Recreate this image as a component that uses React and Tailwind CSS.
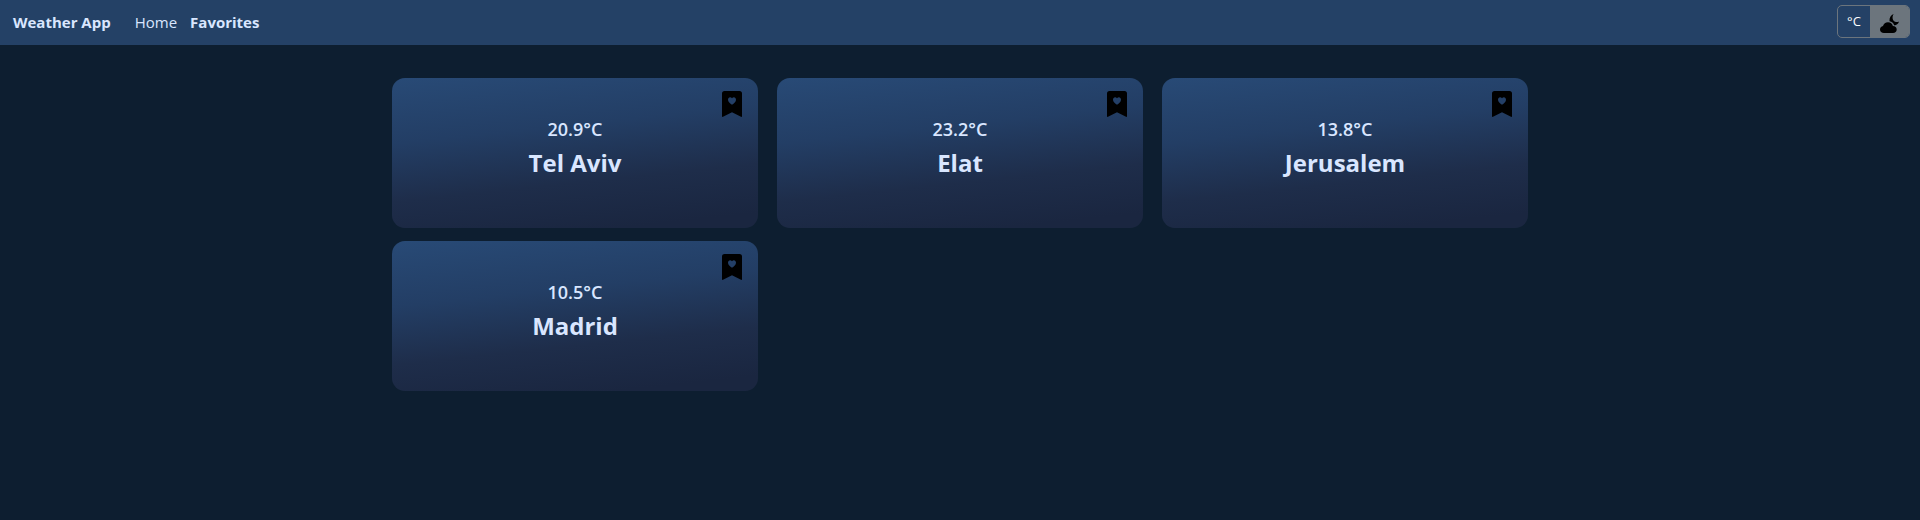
const cities = [
  { name: "Tel Aviv", temp: "20.9°C" },
  { name: "Elat", temp: "23.2°C" },
  { name: "Jerusalem", temp: "13.8°C" },
  { name: "Madrid", temp: "10.5°C" },
];

function BookmarkHeartIcon() {
  return (
    <svg viewBox="0 0 20 26" className="h-[26px] w-5" fill="currentColor" aria-hidden="true">
      <path
        fillRule="evenodd"
        d="M2.5 0h15A2.5 2.5 0 0 1 20 2.500V25.200q0 1.100-1 .6L10 21.200 1 25.800q-1 .5-1-.6V2.500A2.500 2.500 0 0 1 2.500 0ZM10 7.200C8.600 5.400 6 6.100 6 8.700c0 1.900 2 3.600 4 5 2-1.400 4-3.100 4-5 0-2.600-2.600-3.300-4-1.500Z"
      />
    </svg>
  );
}

function CloudyNightIcon() {
  return (
    <svg viewBox="0 0 19 19" className="size-[19px]" fill="currentColor" aria-hidden="true">
      <path d="M4 19C1.600 19 0 17.600 0 15.600c0-1.800 1.200-3.200 3-3.500C3.700 9.800 5.500 8.200 8 8.200c2.500 0 4.400 1.600 4.900 3.900 2.300.1 3.800 1.500 3.800 3.500 0 2-1.500 3.400-3.700 3.400Z" />
      <path d="M13.600 0C11 1 9.400 3.300 9.500 6.300c0 .4 0 .7.100 1 2.200.4 3.900 1.900 4.600 3.900h.8c1.900-.3 3.500-1.600 4-3.700-1.200.7-2.600.8-3.900.2C12.400 6.500 11.800 3 13.600 0Z" />
    </svg>
  );
}

function CityCard({ name, temp }) {
  return (
    <article className="relative flex h-[150px] flex-col items-center rounded-[13px] bg-[linear-gradient(174deg,#284a76_0%,#233e65_35%,#1e2d4a_66%,#1a2640_92%)] pt-[35px]">
      <p className="text-lg font-semibold leading-8">{temp}</p>
      <h2 className="text-2xl font-bold leading-9">{name}</h2>
      <button type="button" aria-label={`Remove ${name} from favorites`} className="absolute right-4 top-[13px] text-black">
        <BookmarkHeartIcon />
      </button>
    </article>
  );
}

export default function App() {
  return (
    <div className="min-h-screen bg-[#0d1e30] font-['Open_Sans','Noto_Sans',sans-serif] text-[#d9e6ff]">
      <header className="flex h-[45px] items-center justify-between bg-[#244166] pl-[13px] pr-[10px]">
        <nav className="flex items-center text-[15px]">
          <a href="#" className="mr-6 font-bold">Weather App</a>
          <a href="#home" className="mr-[13px]">Home</a>
          <a href="#favorites" className="font-bold">Favorites</a>
        </nav>
        <div className="mb-[2px] flex h-[33px] overflow-hidden rounded-[5px] border border-[#6c757d]">
          <button type="button" aria-label="Temperature unit" className="w-8 text-[13px] text-white">°C</button>
          <button type="button" aria-label="Dark theme" className="flex w-[39px] items-center justify-center bg-[#6c757d] pt-1 text-black">
            <CloudyNightIcon />
          </button>
        </div>
      </header>
      <main className="mx-auto grid max-w-[1136px] grid-cols-3 gap-x-[19px] gap-y-[13px] pt-[33px]">
        {cities.map((city) => (
          <CityCard key={city.name} {...city} />
        ))}
      </main>
    </div>
  );
}
